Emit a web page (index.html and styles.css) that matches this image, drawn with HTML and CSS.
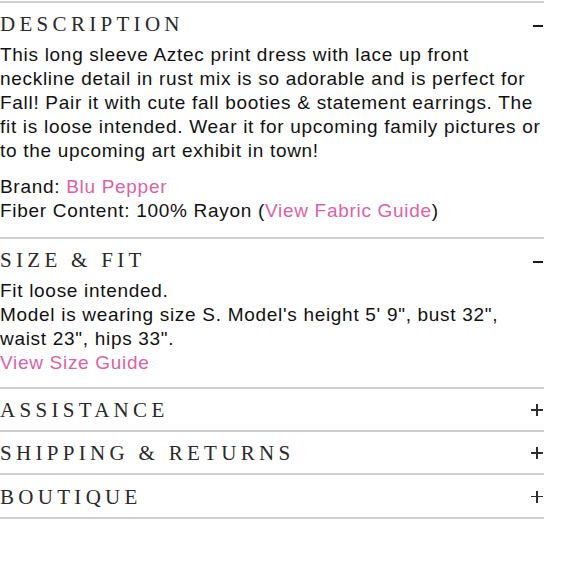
FILE: index.html
```html
<!DOCTYPE html>
<html>
<head>
<meta charset="utf-8">
<link rel="stylesheet" href="styles.css">
</head>
<body>
<div class="accordion">
  <section class="panel open">
    <div class="head">
      <span class="title">DESCRIPTION</span>
      <span class="minus"></span>
    </div>
    <div class="body body-desc">
      <p>This long sleeve Aztec print dress with lace up front neckline detail in rust mix is so adorable and is perfect for Fall! Pair it with cute fall booties &amp; statement earrings. The fit is loose intended. Wear it for upcoming family pictures or to the upcoming art exhibit in town!</p>
      <p>Brand: <a href="#">Blu Pepper</a><br>Fiber Content: 100% Rayon (<a href="#">View Fabric Guide</a>)</p>
    </div>
  </section>
  <section class="panel open">
    <div class="head">
      <span class="title">SIZE &amp; FIT</span>
      <span class="minus"></span>
    </div>
    <div class="body body-size">
      <p>Fit loose intended.<br>Model is wearing size S. Model's height 5' 9", bust 32", waist 23", hips 33".<br><a href="#">View Size Guide</a></p>
    </div>
  </section>
  <section class="panel">
    <div class="head">
      <span class="title">ASSISTANCE</span>
      <span class="plus"></span>
    </div>
  </section>
  <section class="panel">
    <div class="head">
      <span class="title">SHIPPING &amp; RETURNS</span>
      <span class="plus"></span>
    </div>
  </section>
  <section class="panel">
    <div class="head head-last">
      <span class="title">BOUTIQUE</span>
      <span class="plus"></span>
    </div>
  </section>
</div>
</body>
</html>
```
FILE: styles.css
```css
html, body {
  margin: 0;
  padding: 0;
  background: #fff;
}
body {
  padding-top: 1px;
}
.accordion {
  width: 544px;
  border-bottom: 2px solid #cfcfcf;
}
.panel {
  border-top: 2px solid #cfcfcf;
}
.head {
  display: flex;
  align-items: center;
  justify-content: space-between;
  height: 41px;
  padding-top: 1px;
  box-sizing: border-box;
}
.head-last {
  height: 42px;
}
.panel.open .head {
  height: 40px;
  align-items: flex-start;
  padding-top: 8px;
}
.title {
  font-family: "Liberation Serif", "DejaVu Serif", serif;
  font-size: 21px;
  line-height: 26px;
  letter-spacing: 4.3px;
  color: #2a2a2a;
}
.minus {
  width: 10px;
  height: 2px;
  background: #1a1a1a;
  margin-right: 1px;
  margin-top: 14px;
}
.plus {
  position: relative;
  width: 12px;
  height: 12px;
  margin-right: 1px;
}
.plus::before, .plus::after {
  content: "";
  position: absolute;
  background: #2e2e2e;
}
.plus::before {
  left: 0;
  right: 0;
  top: 5.25px;
  height: 1.5px;
}
.plus::after {
  top: 0;
  bottom: 0;
  left: 5.25px;
  width: 1.5px;
}
.body {
  font-family: "Liberation Sans", Arial, sans-serif;
  font-size: 19px;
  line-height: 24px;
  letter-spacing: 0.7px;
  color: #111;
}
.body-desc {
  padding-bottom: 14px;
}
.body-size {
  padding-bottom: 12px;
}
.body p {
  margin: 0 0 12px;
}
.body p:last-child {
  margin-bottom: 0;
}
.body a {
  color: #dc62a4;
  text-decoration: none;
}
```
